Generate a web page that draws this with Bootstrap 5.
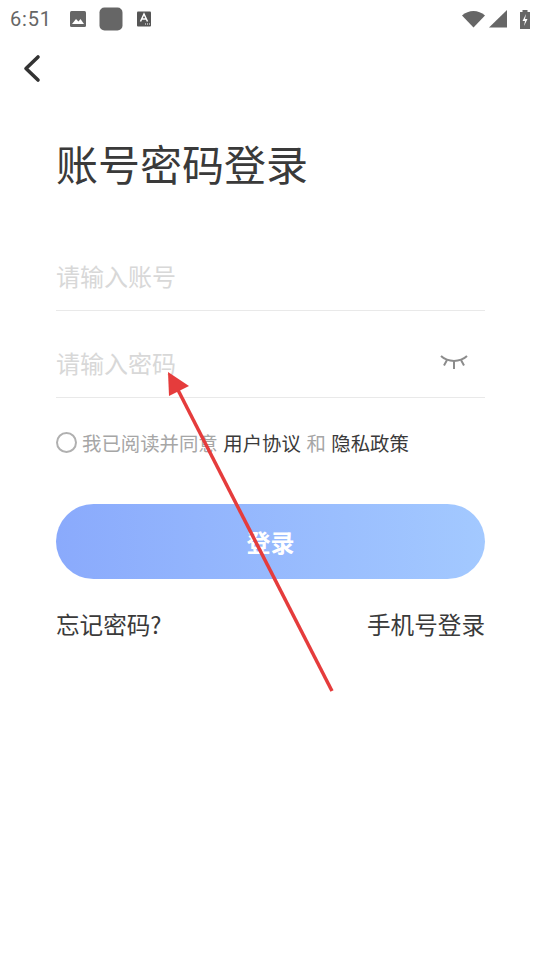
<!DOCTYPE html>
<html lang="zh-CN">
<head>
  <meta charset="UTF-8" />
  <meta name="viewport" content="width=device-width, initial-scale=1.0" />
  <title>账号密码登录</title>
  <link href="https://cdn.jsdelivr.net/npm/bootstrap@5.3.0/dist/css/bootstrap.min.css" rel="stylesheet" />
  <style>
    body { width: 540px; height: 960px; margin: 0; overflow: hidden; position: relative; background: #fff; font-family: "Noto Sans CJK SC", "Noto Sans", sans-serif; }
    .status-row { height: 38px; padding: 0 9px 0 10px; color: #666; }
    .status-time { font-family: Roboto, sans-serif; font-size: 20px; letter-spacing: .8px; line-height: 38px; width: 59px; }
    .status-square { margin: 0 13px 0 12px; }
    .wifi-icon { margin-right: -1px; }
    .signal-icon { margin-left: 4px; margin-right: 10px; }
    .back-row { height: 60px; padding-left: 22px; }
    .login-body { padding: 0 55px 0 56px; }
    .login-title { font-size: 42px; font-weight: 400; line-height: 60px; color: #3a3a3a; margin: 35px 0 0; }
    .field-row { height: 87px; border-bottom: 1px solid #e9e9e9; padding-bottom: 18px; }
    .field-first { margin-top: 31px; }
    .field-text { font-size: 24px; font-weight: 400; color: #d8d8d8; line-height: 32px; }
    .eye-icon { margin: 0 16px 6px 0; }
    .agree-row { margin-top: 31px; height: 27px; font-size: 19.4px; font-weight: 400; color: #a6a6a6; word-spacing: 1.2px; }
    .agree-dot { width: 21px; height: 21px; border: 2px solid #b0b0b0; border-radius: 50%; margin-right: 5px; flex: none; }
    .agree-row b { font-weight: 400; color: #3a3a3a; }
    .login-btn { height: 75px; margin-top: 48px; border: 0; border-radius: 38px; width: 100%; background: linear-gradient(90deg, #8aaafc, #a3c9ff); color: #fff; font-size: 24px; font-weight: 700; }
    .link-row { margin-top: 29px; font-size: 23.6px; font-weight: 400; color: #3a3a3a; line-height: 32px; }
    .arrow-layer { position: absolute; left: 0; top: 0; pointer-events: none; }
  </style>
</head>
<body>
  <div class="status-row d-flex align-items-center">
    <span class="status-time">6:51</span>
    <svg width="18" height="18" viewBox="0 0 18 18"><rect x="1" y="1" width="16" height="16" rx="1.5" fill="#666"/><path d="M3 14l4-5 2.500 2.500 2-2.500 3.500 5z" fill="#fff"/></svg>
    <svg width="24" height="24" viewBox="0 0 24 24" class="status-square"><rect x="0.500" y="0.500" width="23" height="23" rx="5" fill="#666"/></svg>
    <svg width="16" height="16" viewBox="0 0 16 16"><rect x="1" y="0.500" width="14" height="15" rx="1" fill="#555"/><path d="M4.500 10.500L8 3l3.500 7.500M5.800 8h4.400" stroke="#fff" stroke-width="1.500" fill="none"/><path d="M9 13h1M11 13h1M13 13h1" stroke="#fff"/></svg>
    <span class="ms-auto d-flex align-items-center">
      <svg width="24" height="18" viewBox="0 0 24 18" class="wifi-icon"><path d="M0 5.500C6.500-.5 16.500-.5 23 5.500L11.500 17.500z" fill="#666"/></svg>
      <svg width="20" height="18" viewBox="0 0 20 18" class="signal-icon"><path d="M0 17.500L18 0v17.500z" fill="#666"/></svg>
      <svg width="12" height="20" viewBox="0 0 12 20"><path d="M3.500 1h5v2H11v17H1V3h2.500z" fill="#666"/><path d="M7 5L3.500 12h2.500L5 17l3.500-7H6z" fill="#fff"/></svg>
    </span>
  </div>

  <div class="back-row d-flex align-items-center">
    <svg width="20" height="30" viewBox="0 0 20 30"><path d="M16 4L4 15.500 16 27" fill="none" stroke="#333" stroke-width="3.600" stroke-linecap="round" stroke-linejoin="round"/></svg>
  </div>

  <div class="login-body">
    <h1 class="login-title">账号密码登录</h1>

    <div class="field-row field-first d-flex align-items-end">
      <span class="field-text">请输入账号</span>
    </div>
    <div class="field-row d-flex align-items-end justify-content-between">
      <span class="field-text">请输入密码</span>
      <svg width="30" height="20" viewBox="0 0 30 20" class="eye-icon"><g fill="none" stroke="#8c8c8c" stroke-width="2"><path d="M2 3c7 6.500 19 6.500 26 0"/><path d="M15 8v8M8 7l-3 5.500M22 7l3 5.500"/></g></svg>
    </div>

    <div class="agree-row d-flex align-items-center">
      <span class="agree-dot"></span>
      <span>我已阅读并同意 <b>用户协议</b> 和 <b>隐私政策</b></span>
    </div>

    <button type="button" class="btn login-btn">登录</button>

    <div class="link-row d-flex justify-content-between">
      <span>忘记密码?</span>
      <span>手机号登录</span>
    </div>
  </div>

  <svg class="arrow-layer" width="540" height="960" viewBox="0 0 540 960">
    <path d="M332 691L178 390" stroke="#e53c3c" stroke-width="3.500" fill="none"/>
    <path d="M168 372L189 386 169 396z" fill="#e53c3c"/>
  </svg>
</body>
</html>
